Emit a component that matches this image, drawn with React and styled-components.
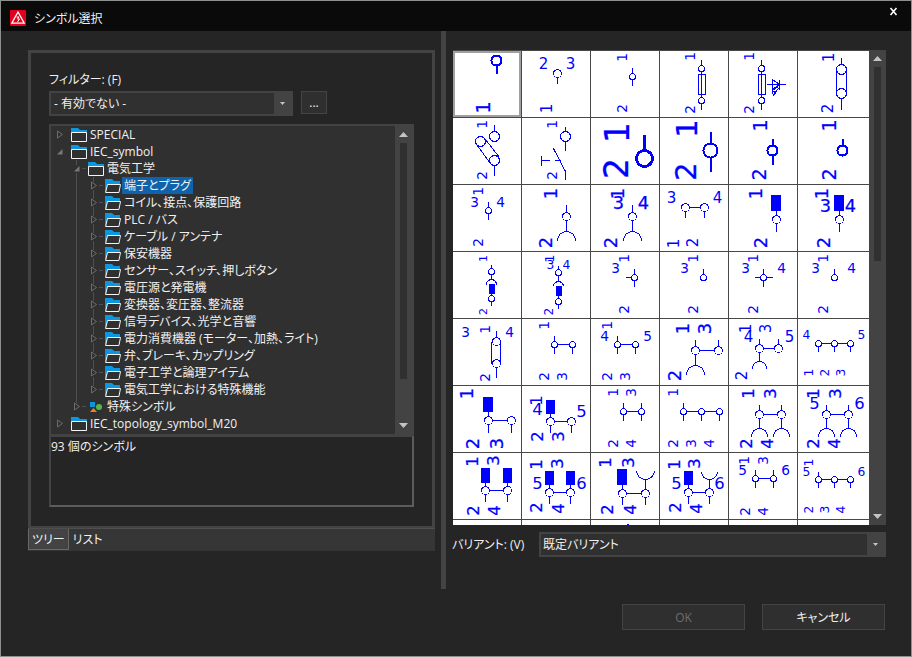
import React, { useState } from 'react';
import styled, { createGlobalStyle } from 'styled-components';

const GlobalStyle = createGlobalStyle`
  * {
    box-sizing: border-box;
  }

  body {
    margin: 0;
    background: #252525;
    color: #f0f0f0;
    font-family: 'Open Sans', 'Noto Sans CJK JP', sans-serif;
    font-size: 12px;
    line-height: 17px;
    font-feature-settings: 'palt';
  }

  button,
  select {
    font: inherit;
    font-feature-settings: inherit;
    color: inherit;
    margin: 0;
    padding: 0;
  }
`;

const Dialog = styled.div`
  display: flex;
  flex-direction: column;
  height: 100vh;
  min-height: 400px;
  border: 1px solid #8f8f8f;
`;

const TitleBar = styled.header`
  display: flex;
  align-items: center;
  gap: 8px;
  height: 30px;
  flex-shrink: 0;
  padding: 4px 9px 0;
  background: #0a0a0a;

  h1 {
    flex: 1;
    margin: 0;
    font-size: 12px;
    font-weight: 400;
  }
`;

const CloseButton = styled.button`
  display: flex;
  align-self: flex-start;
  padding: 2px 4px;
  border: 0;
  background: none;
`;

const Body = styled.main`
  display: flex;
  flex: 1;
  min-height: 0;
`;

const Splitter = styled.div`
  width: 5px;
  flex-shrink: 0;
  background: #434343;
`;

const LeftPane = styled.section`
  display: flex;
  flex-direction: column;
  flex: 0 0 440px;
  padding: 19px 6px 38px 27px;
`;

const Panel = styled.div`
  display: flex;
  flex-direction: column;
  flex: 1;
  min-height: 0;
  padding: 18px 18px 19px;
  border: 3px solid #434343;
  border-bottom-width: 2px;
`;

const FilterRow = styled.div`
  display: flex;
  align-items: flex-start;
  gap: 8px;
  margin: 3px 0 8px;
  padding-right: 87px;
`;

const ComboBox = styled.div`
  display: grid;
  flex: 1;
  height: 25px;
  border: 2px solid #434343;
  background: #303030;

  select,
  span {
    grid-area: 1 / 1;
  }

  select {
    appearance: none;
    width: 100%;
    padding-left: ${(props) => props.$inset};
    border: 0;
    outline: 0;
    background: none;
  }

  span {
    display: flex;
    align-items: center;
    justify-content: center;
    justify-self: end;
    width: 17px;
    background: #434343;
    pointer-events: none;
  }
`;

const BrowseButton = styled.button`
  width: 26px;
  height: 23px;
  border: 1px solid #444;
  background: #2f2f2f;
`;

const TreeBox = styled.div`
  display: flex;
  flex: 1;
  min-height: 0;
  border: 2px solid #434343;
  background: #303030;
  overflow: hidden;
`;

const TreeList = styled.ul`
  flex: 1;
  margin: 0;
  padding: 0;
  overflow: hidden;
  list-style: none;
`;

const TreeRow = styled.li`
  display: flex;
  height: 17px;
  padding-left: ${(props) => (props.$level ? '17px' : 0)};
  white-space: nowrap;

  svg {
    flex-shrink: 0;
  }
`;

const TreeLabel = styled.span`
  margin-left: 1px;
  padding: 0 2px;
  background: ${(props) => (props.$selected ? '#0f62ac' : 'none')};
`;

const InfoBox = styled.output`
  height: 71px;
  flex-shrink: 0;
  padding-top: 1px;
  border: 2px solid #434343;
  border-top-width: 1px;
  border-right-color: #5c5c5c;
  border-bottom-color: #5c5c5c;
`;

const TabStrip = styled.div`
  display: flex;
  height: 23px;
  flex-shrink: 0;
  border-top: 1px solid #4f4f4f;
  background: #363636;
`;

const Tab = styled.button`
  height: 21px;
  padding: 0 3px;
  border: 1px solid ${(props) => (props.$active ? '#686868' : 'transparent')};
  border-top: 0;
  background: ${(props) => (props.$active ? '#434343' : 'none')};
`;

const RightPane = styled.section`
  display: flex;
  flex-direction: column;
  flex: 1;
  min-width: 0;
  padding: 19px 25px 32px 6px;
`;

const SymbolArea = styled.div`
  display: flex;
  flex: 1;
  min-height: 0;
  padding-left: 1px;
`;

const SymbolGrid = styled.div`
  display: grid;
  flex: 1;
  grid-template-columns: repeat(5, 68px) 1fr;
  grid-auto-rows: 66px;
  gap: 1px;
  padding-top: 1px;
  background: #484848;
  overflow: hidden;
`;

const SymbolCell = styled.button`
  display: block;
  min-width: 0;
  border: 0;
  outline: ${(props) => (props.$selected ? '2px solid #a0a0a0' : 'none')};
  outline-offset: -2px;
  background: #fff;
  overflow: hidden;

  svg {
    display: block;
  }
`;

const Scroll = styled.div`
  display: flex;
  flex-direction: column;
  align-items: center;
  width: ${(props) => props.$width};
  flex-shrink: 0;
  background: #434343;

  button {
    display: flex;
    align-items: center;
    justify-content: center;
    width: 100%;
    height: 17px;
    border: 0;
    background: none;
  }
`;

const Track = styled.div`
  flex: 1;
  width: 7px;
`;

const Thumb = styled.div`
  height: ${(props) => props.$size};
  background: #303030;
`;

const VariantRow = styled.div`
  display: flex;
  align-items: center;
  margin-top: 7px;

  label {
    width: 87px;
  }
`;

const Footer = styled.footer`
  display: flex;
  justify-content: flex-end;
  gap: 17px;
  height: 67px;
  flex-shrink: 0;
  padding: 15px 26px 0;
`;

const FooterButton = styled.button`
  width: 123px;
  height: 26px;
  border: 1px solid #444;
  background: #2f2f2f;

  &:disabled {
    color: #6e6e6e;
  }
`;

const AppIcon = () => (
  <svg width='16' height='16' viewBox='0 0 16 16'>
    <rect width='16' height='16' rx='1' fill='#e2001a' />
    <path d='M8 2 14.2 13.2H1.8Z' fill='none' stroke='#fff' strokeWidth='1.3' />
    <path d='M6.5 7h2.5l-1.5 2h2l-2 3' fill='none' stroke='#fff' />
  </svg>
);

const Caret = () => (
  <svg width='5' height='3' viewBox='0 0 5 3'>
    <path d='M0 0h5L2.5 3z' fill='#c4c4c4' />
  </svg>
);

const ScrollArrow = ({ down }) => (
  <svg width='9' height='5' viewBox='0 0 9 5'>
    <path d={down ? 'M0 0h9L4.5 5z' : 'M0 5h9L4.5 0z'} fill='#c4c4c4' />
  </svg>
);

const ScrollBar = ({ width, thumb, name }) => (
  <Scroll $width={width}>
    <button type='button' aria-label={`${name} 上へ`}>
      <ScrollArrow />
    </button>
    <Track>
      <Thumb $size={thumb} />
    </Track>
    <button type='button' aria-label={`${name} 下へ`}>
      <ScrollArrow down />
    </button>
  </Scroll>
);

const Guide = () => (
  <svg width='17' height='17'>
    <path d='M8.5 0v17' stroke='#505050' />
  </svg>
);

const Expander = ({ open, level, last }) => (
  <svg width='20' height='17' fill='none' stroke='#505050'>
    {level > 0 && (
      <path d={`M8.5 0v5${last ? '' : 'M8.5 13v4'}M14 8.5h4`} />
    )}
    {open ? (
      <path d='M11.5 6v5.5H6z' fill='#777' stroke='none' />
    ) : (
      <path d='M6.5 5 11.5 8.5 6.5 12z' stroke='#6c6c6c' />
    )}
  </svg>
);

const Folder = ({ opened }) => (
  <svg width='16' height='17' viewBox='0 0 16 17'>
    <path
      d={opened ? 'M0 2h7l2 2h6v4H2v7H0z' : 'M0 2h7l2 2h7v4H0z'}
      fill='#0c96e0'
    />
    <path
      d={opened ? 'M2.5 7.5h13l-1.6 8H.6z' : 'M.5 6.5h15v9H.5z'}
      fill='#303030'
      stroke='#f4f4f4'
    />
  </svg>
);

const Shapes = () => (
  <svg width='16' height='17' viewBox='0 0 16 17'>
    <rect x='2' y='4' width='5' height='5' fill='#0c96e0' />
    <circle cx='11' cy='9' r='3' fill='#55b948' />
    <path d='M2 14h7L5.5 10z' fill='#f08020' />
  </svg>
);

const tree = [
  { level: 0, text: 'SPECIAL' },
  { level: 0, text: 'IEC_symbol', open: true },
  { level: 1, text: '電気工学', open: true },
  { level: 2, text: '端子とプラグ' },
  { level: 2, text: 'コイル、接点、保護回路' },
  { level: 2, text: 'PLC / バス' },
  { level: 2, text: 'ケーブル / アンテナ' },
  { level: 2, text: '保安機器' },
  { level: 2, text: 'センサー、スイッチ、押しボタン' },
  { level: 2, text: '電圧源と発電機' },
  { level: 2, text: '変換器、変圧器、整流器' },
  { level: 2, text: '信号デバイス、光学と音響' },
  { level: 2, text: '電力消費機器 (モーター、加熱、ライト)' },
  { level: 2, text: '弁、ブレーキ、カップリング' },
  { level: 2, text: '電子工学と論理アイテム' },
  { level: 2, text: '電気工学における特殊機能', last: true },
  { level: 1, text: '特殊シンボル', last: true, shapes: true },
  { level: 0, text: 'IEC_topology_symbol_M20' },
  { level: 0, text: '' },
];

// Connection number, turned to read upwards unless "up" is set. h is the glyph height.
const Num = ({ n, x, y, h = 10, b, up }) => (
  <text
    transform={up ? `translate(${x} ${y})` : `translate(${x - 1} ${y}) rotate(-90)`}
    y={h / 2}
    fontSize={h / 0.73}
    textAnchor='middle'
    fill='#00f'
    stroke={b ? '#00f' : 'none'}
    strokeWidth={b ? b / 2 : 0}
  >
    {n}
  </text>
);

// Terminal circle with its stubs; u and d are the far ends above and below.
const Node = ({ x, y, r = 4, u, d, w = 1 }) => (
  <g strokeWidth={w}>
    {u !== undefined && <path d={`M${x} ${u}V${y - r}`} />}
    {d !== undefined && <path d={`M${x} ${y + r}V${d}`} />}
    <circle cx={x} cy={y} r={r} />
  </g>
);

const Line = ({ d, w = 1 }) => <path d={d} strokeWidth={w} />;

const Socket = ({ x, y, r = 9 }) => (
  <path d={`M${x - r} ${y + r}a${r} ${r} 0 0 1 ${2 * r} 0`} />
);

const Cup = ({ x, y, r = 9 }) => (
  <path d={`M${x - r} ${y}a${r} ${r} 0 0 0 ${2 * r} 0`} />
);

const Plug = ({ x, y, w = 9, h = 15 }) => (
  <rect x={x - 0.5} y={y - 0.5} width={w} height={h} fill='#00f' stroke='none' />
);

const Fuse = ({ x }) => (
  <>
    <Node x={x} y={17} r={3} u={8} />
    <Line d={`M${x} 20V46M${x - 3} 23h7v20h-7z`} />
    <Node x={x} y={49} r={3} d={58} />
  </>
);

const symbols = [
  // row 1
  <>
    <Node x={43} y={9} r={5} d={22} w={2} />
    <Num n='1' x={30} y={56} h={14} b={0.6} />
  </>,
  <>
    <Num n='2' x={21} y={12} h={11} up />
    <Num n='3' x={48} y={12} h={11} up />
    <Node x={35} y={22} d={32} />
    <Num n='1' x={25} y={57} h={11} />
  </>,
  <>
    <Num n='1' x={31} y={6} />
    <Node x={41} y={25} r={3} u={16} d={34} />
    <Num n='2' x={31} y={57} />
  </>,
  <>
    <Num n='1' x={30} y={5} />
    <Fuse x={41} />
    <Num n='2' x={30} y={58} />
  </>,
  <>
    <Num n='1' x={20} y={5} />
    <Fuse x={32} />
    <Line d='M37 33H56M43 28V38L50 33ZM50 28V38M49 35 43 39M49 37 44 43M43 37v3h3M43 41l1 3 2-2' />
    <Num n='2' x={20} y={58} />
  </>,
  <>
    <Num n='1' x={31} y={6} h={11} />
    <Node x={43} y={18} r={5} u={6} />
    <Line d='M38 18V42M48 18V42' />
    <Node x={43} y={42} r={5} d={58} />
    <Num n='2' x={30} y={57} h={11} />
  </>,
  // row 2
  <>
    <Num n='1' x={29} y={6} />
    <Node x={41} y={18} r={5} u={6} />
    <Node x={27} y={23} r={5} />
    <Line d='M23 26 37 45M32 21 46 39' />
    <Node x={41} y={42} r={5} d={57} />
    <Num n='2' x={29} y={57} />
  </>,
  <>
    <Num n='1' x={30} y={6} />
    <Node x={43} y={18} r={5} u={8} d={32} />
    <Line d='M31 30 43 53V61M19 37V47M19 42H27M32 42H38' />
    <Num n='2' x={30} y={57} />
  </>,
  <>
    <Num n='1' x={26} y={14} h={24} b={0.6} />
    <Num n='2' x={25} y={50} h={24} b={0.6} />
    <Node x={53} y={40} r={8} u={16} w={3} />
  </>,
  <>
    <Num n='1' x={27} y={10} h={21} b={0.6} />
    <Num n='2' x={26} y={53} h={21} b={0.6} />
    <Node x={50} y={32} r={7} u={13} d={53} w={2} />
  </>,
  <>
    <Num n='1' x={31} y={7} h={14} b={0.4} />
    <Num n='2' x={30} y={56} h={14} b={0.4} />
    <Node x={43} y={32} r={5} u={20} d={46} w={2} />
  </>,
  <>
    <Num n='1' x={31} y={7} h={14} b={0.4} />
    <Num n='2' x={31} y={56} h={14} b={0.4} />
    <Node x={44} y={32} r={5} u={20} w={2} />
  </>,
  // row 3
  <>
    <Num n='1' x={25} y={6} />
    <Num n='3' x={21} y={16} up />
    <Num n='4' x={47} y={16} up />
    <Node x={35} y={25} r={3} u={16} d={34} />
    <Num n='2' x={25} y={57} />
  </>,
  <>
    <Num n='1' x={29} y={8} h={13} b={0.5} />
    <Node x={44} y={31} u={19} d={46} />
    <Socket x={44} y={46} />
    <Num n='2' x={24} y={57} h={13} b={0.5} />
  </>,
  <>
    <Num n='1' x={27} y={8} h={13} b={0.5} />
    <Num n='3' x={27} y={17} h={13} b={0.5} up />
    <Num n='4' x={52} y={17} h={13} b={0.5} up />
    <Node x={41} y={31} u={19} d={46} />
    <Socket x={41} y={46} />
    <Num n='2' x={20} y={57} h={13} b={0.5} />
  </>,
  <>
    <Num n='3' x={11} y={12} h={11} up />
    <Num n='4' x={57} y={12} h={11} up />
    <Node x={25} y={22} d={32} />
    <Node x={44} y={22} d={32} />
    <Line d='M29 22H40' />
    <Num n='1' x={14} y={58} h={11} />
    <Num n='2' x={33} y={57} h={11} />
  </>,
  <>
    <Num n='1' x={27} y={8} h={13} b={0.5} />
    <Plug x={42} y={10} w={10} h={16} />
    <Node x={47} y={34} u={25} d={46} />
    <Num n='2' x={32} y={57} h={13} b={0.5} />
  </>,
  <>
    <Num n='1' x={24} y={8} h={13} b={0.5} />
    <Num n='3' x={27} y={20} h={13} b={0.4} up />
    <Num n='4' x={52} y={20} h={13} b={0.4} up />
    <Plug x={36} y={10} w={10} h={16} />
    <Node x={41} y={34} u={25} d={46} />
    <Num n='2' x={26} y={57} h={13} b={0.5} />
  </>,
  // row 4
  <>
    <Num n='1' x={30} y={6} h={8} />
    <Node x={38} y={19} r={3} u={12} d={27} />
    <Socket x={38} y={27} r={5} />
    <Plug x={36} y={32} w={6} h={10} />
    <Node x={38} y={46} r={3} u={41} d={53} />
    <Num n='2' x={30} y={59} h={8} />
  </>,
  <>
    <Num n='1' x={28} y={6} h={9} />
    <Num n='3' x={28} y={12} h={9} up />
    <Num n='4' x={44} y={12} h={9} up />
    <Node x={36} y={20} r={3} u={13} d={29} />
    <Socket x={36} y={29} r={5} />
    <Plug x={34} y={34} w={6} h={10} />
    <Node x={36} y={49} r={3} u={43} d={56} />
    <Num n='2' x={27} y={59} h={9} />
  </>,
  <>
    <Num n='1' x={33} y={6} />
    <Num n='3' x={24} y={15} up />
    <Node x={43} y={25} r={3} u={16} d={34} />
    <Line d='M34 25H40' />
    <Num n='2' x={33} y={57} />
  </>,
  <>
    <Num n='1' x={33} y={6} />
    <Num n='3' x={24} y={15} up />
    <Node x={43} y={25} r={3} u={16} />
    <Num n='2' x={33} y={57} />
  </>,
  <>
    <Num n='1' x={24} y={6} />
    <Num n='3' x={16} y={15} up />
    <Num n='4' x={52} y={15} up />
    <Node x={34} y={25} r={3} u={16} d={34} />
    <Line d='M25 25H31M37 25H43' />
    <Num n='2' x={24} y={57} />
  </>,
  <>
    <Num n='1' x={25} y={6} />
    <Num n='3' x={17} y={15} up />
    <Num n='4' x={53} y={15} up />
    <Node x={36} y={25} r={3} u={16} />
    <Num n='2' x={25} y={57} />
  </>,
  // row 5
  <>
    <Num n='3' x={12} y={12} up />
    <Num n='1' x={32} y={10} />
    <Num n='4' x={56} y={12} up />
    <Node x={43} y={22} u={11} />
    <Line d='M38 22V44M47 22V44' />
    <Node x={43} y={44} d={58} />
    <Num n='2' x={32} y={58} />
  </>,
  <>
    <Num n='1' x={22} y={6} />
    <Node x={32} y={25} r={3} u={16} d={34} />
    <Node x={50} y={25} r={3} d={34} />
    <Line d='M35 25H47' />
    <Num n='2' x={22} y={57} />
    <Num n='3' x={40} y={57} />
  </>,
  <>
    <Num n='1' x={16} y={6} />
    <Num n='4' x={13} y={16} up />
    <Num n='5' x={56} y={16} up />
    <Node x={26} y={25} r={3} u={16} d={34} />
    <Node x={44} y={25} r={3} d={34} />
    <Line d='M29 25H41' />
    <Num n='2' x={16} y={57} />
    <Num n='3' x={34} y={57} />
  </>,
  <>
    <Num n='1' x={23} y={9} h={13} b={0.5} />
    <Num n='3' x={45} y={9} h={13} b={0.5} />
    <Node x={35} y={31} u={20} d={46} />
    <Node x={58} y={31} u={20} />
    <Line d='M39 31H54' />
    <Socket x={35} y={46} />
    <Num n='2' x={15} y={56} h={13} b={0.5} />
  </>,
  <>
    <Num n='1' x={17} y={9} h={11} />
    <Num n='3' x={37} y={9} h={11} />
    <Num n='4' x={19} y={17} h={11} up />
    <Num n='5' x={60} y={17} h={11} up />
    <Node x={30} y={29} u={19} d={42} />
    <Node x={49} y={29} u={19} />
    <Line d='M34 29H45' />
    <Socket x={30} y={42} r={7} />
    <Num n='2' x={13} y={56} h={11} />
  </>,
  <>
    <Num n='4' x={8} y={15} h={9} up />
    <Num n='5' x={63} y={15} h={9} up />
    <Node x={20} y={24} r={3} d={32} />
    <Node x={36} y={24} r={3} d={32} />
    <Node x={52} y={24} r={3} d={32} />
    <Line d='M23 24H33M39 24H49' />
    <Num n='1' x={11} y={53} h={9} />
    <Num n='2' x={27} y={53} h={9} />
    <Num n='3' x={43} y={53} h={9} />
  </>,
  // row 6
  <>
    <Num n='1' x={14} y={7} h={13} b={0.5} />
    <Plug x={30} y={11} w={10} />
    <Node x={35} y={34} u={25} d={46} />
    <Node x={58} y={34} d={46} />
    <Line d='M39 34H54' />
    <Num n='2' x={20} y={57} h={13} b={0.5} />
    <Num n='3' x={44} y={57} h={13} b={0.5} />
  </>,
  <>
    <Num n='1' x={14} y={14} h={12} />
    <Num n='4' x={15} y={22} h={12} up />
    <Num n='5' x={59} y={24} h={12} up />
    <Plug x={24} y={14} h={14} />
    <Node x={28} y={35} u={27} d={46} />
    <Node x={49} y={35} d={46} />
    <Line d='M32 35H45' />
    <Num n='2' x={15} y={50} h={12} b={0.4} />
    <Num n='3' x={36} y={50} h={12} b={0.4} />
  </>,
  <>
    <Num n='1' x={22} y={6} />
    <Num n='3' x={40} y={6} />
    <Node x={32} y={25} r={3} u={16} d={34} />
    <Node x={50} y={25} r={3} u={16} d={34} />
    <Line d='M35 25H47' />
    <Num n='2' x={22} y={57} />
    <Num n='4' x={40} y={57} />
  </>,
  <>
    <Num n='1' x={13} y={6} />
    <Node x={23} y={25} r={3} u={16} d={34} />
    <Node x={41} y={25} r={3} d={34} />
    <Node x={59} y={25} r={3} d={34} />
    <Line d='M26 25H38M44 25H56' />
    <Num n='2' x={13} y={57} />
    <Num n='3' x={31} y={57} />
    <Num n='4' x={49} y={57} />
  </>,
  <>
    <Num n='1' x={19} y={7} h={12} b={0.5} />
    <Num n='3' x={41} y={7} h={12} b={0.5} />
    <Node x={30} y={28} u={18} d={42} />
    <Node x={52} y={28} u={18} d={42} />
    <Line d='M34 28H48' />
    <Socket x={30} y={42} r={8} />
    <Socket x={52} y={42} r={8} />
    <Num n='2' x={17} y={57} h={12} b={0.5} />
    <Num n='4' x={38} y={57} h={12} b={0.5} />
  </>,
  <>
    <Num n='1' x={15} y={7} h={12} b={0.5} />
    <Num n='3' x={37} y={7} h={12} b={0.5} />
    <Num n='5' x={16} y={16} h={12} up />
    <Num n='6' x={61} y={16} h={12} up />
    <Node x={28} y={28} u={18} d={42} />
    <Node x={50} y={28} u={18} d={42} />
    <Line d='M32 28H46' />
    <Socket x={28} y={42} r={8} />
    <Socket x={50} y={42} r={8} />
    <Num n='2' x={15} y={57} h={12} b={0.5} />
    <Num n='4' x={36} y={57} h={12} b={0.5} />
  </>,
  // row 7
  <>
    <Num n='1' x={19} y={8} h={12} b={0.5} />
    <Num n='3' x={40} y={7} h={12} b={0.5} />
    <Plug x={28} y={15} />
    <Plug x={50} y={15} />
    <Node x={32} y={37} u={29} d={48} />
    <Node x={54} y={37} u={29} d={48} />
    <Line d='M36 37H50' />
    <Num n='2' x={20} y={57} h={12} b={0.5} />
    <Num n='4' x={41} y={57} h={12} b={0.5} />
  </>,
  <>
    <Num n='1' x={14} y={11} h={12} b={0.5} />
    <Num n='3' x={35} y={10} h={12} b={0.5} />
    <Num n='5' x={15} y={29} h={12} up />
    <Num n='6' x={59} y={29} h={12} up />
    <Plug x={23} y={18} h={14} />
    <Plug x={44} y={18} h={14} />
    <Node x={27} y={39} u={31} d={50} />
    <Node x={48} y={39} u={31} d={50} />
    <Line d='M31 39H44' />
    <Num n='2' x={14} y={54} h={12} b={0.4} />
    <Num n='4' x={36} y={55} h={12} b={0.4} />
  </>,
  <>
    <Num n='1' x={14} y={9} h={12} b={0.5} />
    <Num n='3' x={37} y={9} h={12} b={0.5} />
    <Plug x={26} y={16} w={10} h={16} />
    <Cup x={54} y={17} />
    <Node x={31} y={40} u={31} d={51} />
    <Node x={54} y={40} u={26} d={51} />
    <Line d='M35 40H50' />
    <Num n='2' x={16} y={56} h={12} b={0.5} />
    <Num n='4' x={39} y={56} h={12} b={0.5} />
  </>,
  <>
    <Num n='1' x={14} y={11} h={12} b={0.5} />
    <Num n='3' x={34} y={10} h={12} b={0.5} />
    <Num n='5' x={16} y={29} h={12} up />
    <Num n='6' x={59} y={29} h={12} up />
    <Plug x={24} y={18} h={14} />
    <Cup x={49} y={18} r={8} />
    <Node x={28} y={39} u={31} d={50} />
    <Node x={49} y={39} u={26} d={50} />
    <Line d='M32 39H45' />
    <Num n='2' x={15} y={54} h={12} b={0.4} />
    <Num n='4' x={36} y={55} h={12} b={0.4} />
  </>,
  <>
    <Num n='1' x={15} y={7} />
    <Num n='3' x={34} y={7} />
    <Num n='5' x={13} y={16} up />
    <Num n='6' x={56} y={16} up />
    <Node x={26} y={25} r={3} u={16} d={34} />
    <Node x={44} y={25} r={3} u={16} d={34} />
    <Line d='M29 25H41' />
    <Num n='2' x={16} y={58} />
    <Num n='4' x={34} y={58} />
  </>,
  <>
    <Num n='1' x={11} y={9} h={9} />
    <Num n='5' x={8} y={18} h={9} up />
    <Num n='6' x={63} y={18} h={9} up />
    <Node x={20} y={26} r={3} u={18} d={34} />
    <Node x={36} y={26} r={3} d={34} />
    <Node x={52} y={26} r={3} d={34} />
    <Line d='M23 26H33M39 26H49' />
    <Num n='2' x={11} y={56} h={9} />
    <Num n='3' x={27} y={56} h={9} />
    <Num n='4' x={43} y={56} h={9} />
  </>,
  // row 8, only its top edge shows
  null,
  null,
  <Line d='M35 4h2' />,
  null,
  <Line d='M28 4v8' />,
  <Line d='M30 4v8' />,
];

const App = () => {
  const [node, setNode] = useState('端子とプラグ');
  const [symbol, setSymbol] = useState(0);
  const [tab, setTab] = useState('ツリー');

  return (
    <Dialog>
      <GlobalStyle />
      <TitleBar>
        <AppIcon />
        <h1>シンボル選択</h1>
        <CloseButton type='button' aria-label='閉じる'>
          <svg width='9' height='9' viewBox='0 0 9 9'>
            <path d='M1.5 1 7.5 8M7.5 1 1.5 8' stroke='#fff' strokeWidth='1.6' />
          </svg>
        </CloseButton>
      </TitleBar>
      <Body>
        <LeftPane>
          <Panel>
            <label htmlFor='filter'>フィルター: (F)</label>
            <FilterRow>
              <ComboBox $inset='3px'>
                <select id='filter'>
                  <option>- 有効でない -</option>
                </select>
                <span>
                  <Caret />
                </span>
              </ComboBox>
              <BrowseButton type='button'>...</BrowseButton>
            </FilterRow>
            <TreeBox>
              <TreeList role='tree'>
                {tree.map((item) => (
                  <TreeRow
                    key={item.text}
                    role='treeitem'
                    $level={item.level}
                    onClick={() => setNode(item.text)}
                  >
                    {item.level > 1 && <Guide />}
                    <Expander {...item} />
                    {item.shapes ? (
                      <Shapes />
                    ) : (
                      <Folder opened={item.level > 1} />
                    )}
                    <TreeLabel $selected={item.text === node}>
                      {item.text}
                    </TreeLabel>
                  </TreeRow>
                ))}
              </TreeList>
              <ScrollBar width='17px' thumb='86%' name='ツリー' />
            </TreeBox>
            <InfoBox>93 個のシンボル</InfoBox>
          </Panel>
          <TabStrip>
            {['ツリー', 'リスト'].map((name) => (
              <Tab
                key={name}
                type='button'
                $active={name === tab}
                onClick={() => setTab(name)}
              >
                {name}
              </Tab>
            ))}
          </TabStrip>
        </LeftPane>
        <Splitter />
        <RightPane>
          <SymbolArea>
            <SymbolGrid>
              {symbols.map((drawing, index) => (
                <SymbolCell
                  key={index}
                  type='button'
                  aria-label={`シンボル ${index + 1}`}
                  $selected={index === symbol}
                  onClick={() => setSymbol(index)}
                >
                  <svg
                    width='71'
                    height='66'
                    fontFamily="'DejaVu Sans', sans-serif"
                    shapeRendering='crispEdges'
                  >
                    <g transform='translate(.5 .5)' fill='none' stroke='#00f'>
                      {drawing}
                    </g>
                  </svg>
                </SymbolCell>
              ))}
            </SymbolGrid>
            <ScrollBar width='17px' thumb='44%' name='シンボル' />
          </SymbolArea>
          <VariantRow>
            <label htmlFor='variant'>バリアント: (V)</label>
            <ComboBox $inset='2px'>
              <select id='variant'>
                <option>既定バリアント</option>
              </select>
              <span>
                <Caret />
              </span>
            </ComboBox>
          </VariantRow>
        </RightPane>
      </Body>
      <Footer>
        <FooterButton type='button' disabled>
          OK
        </FooterButton>
        <FooterButton type='button'>キャンセル</FooterButton>
      </Footer>
    </Dialog>
  );
};

export default App;
